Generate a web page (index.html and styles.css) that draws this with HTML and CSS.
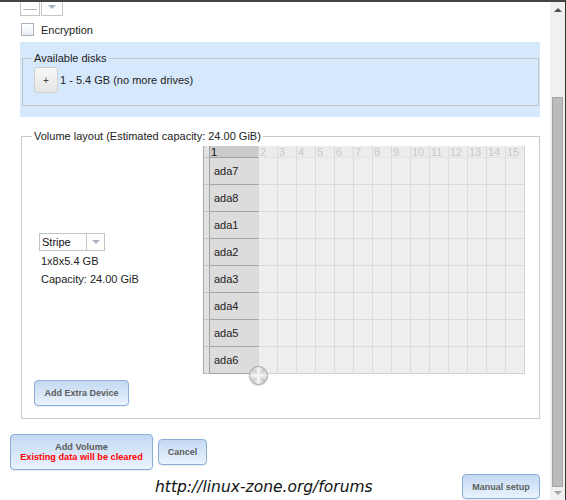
FILE: index.html
```html
<!DOCTYPE html>
<html lang="en">
<head>
    <meta charset="UTF-8">
    <title>Volume Manager</title>
    <link rel="stylesheet" href="styles.css">
</head>
<body>
<div class="window">
    <div class="page">
        <!-- key length select, scrolled mostly out of view -->
        <div class="select select-top">
            <span class="select-value">-----</span>
            <span class="select-arrow"><i class="caret"></i></span>
        </div>

        <label class="check-row"><span class="checkbox"></span>Encryption</label>

        <div class="disk-panel">
            <fieldset class="group">
                <legend>Available disks</legend>
                <div class="disk-row">
                    <button class="btn-plus">+</button>
                    <span>1 - 5.4 GB (no more drives)</span>
                </div>
            </fieldset>
        </div>

        <fieldset class="group volume">
            <legend>Volume layout (Estimated capacity: 24.00 GiB)</legend>
            <div class="layout-row">
                <div class="layout-info">
                    <div class="select select-type">
                        <span class="select-value">Stripe</span>
                        <span class="select-arrow"><i class="caret"></i></span>
                    </div>
                    <div class="info-line">1x8x5.4 GB</div>
                    <div class="info-line">Capacity: 24.00 GiB</div>
                </div>

                <div class="grid-wrap">
                    <div class="disk-grid">
                        <div class="grid-row head">
                            <i class="strip"></i><span class="disk on">1</span>
                            <span class="slot">2</span><span class="slot">3</span><span class="slot">4</span><span class="slot">5</span><span class="slot">6</span><span class="slot">7</span><span class="slot">8</span><span class="slot">9</span><span class="slot">10</span><span class="slot">11</span><span class="slot">12</span><span class="slot">13</span><span class="slot">14</span><span class="slot">15</span>
                        </div>
                        <div class="grid-row"><i class="strip"></i><span class="disk">ada7</span><i class="slot"></i><i class="slot"></i><i class="slot"></i><i class="slot"></i><i class="slot"></i><i class="slot"></i><i class="slot"></i><i class="slot"></i><i class="slot"></i><i class="slot"></i><i class="slot"></i><i class="slot"></i><i class="slot"></i><i class="slot"></i></div>
                        <div class="grid-row"><i class="strip"></i><span class="disk">ada8</span><i class="slot"></i><i class="slot"></i><i class="slot"></i><i class="slot"></i><i class="slot"></i><i class="slot"></i><i class="slot"></i><i class="slot"></i><i class="slot"></i><i class="slot"></i><i class="slot"></i><i class="slot"></i><i class="slot"></i><i class="slot"></i></div>
                        <div class="grid-row"><i class="strip"></i><span class="disk">ada1</span><i class="slot"></i><i class="slot"></i><i class="slot"></i><i class="slot"></i><i class="slot"></i><i class="slot"></i><i class="slot"></i><i class="slot"></i><i class="slot"></i><i class="slot"></i><i class="slot"></i><i class="slot"></i><i class="slot"></i><i class="slot"></i></div>
                        <div class="grid-row"><i class="strip"></i><span class="disk">ada2</span><i class="slot"></i><i class="slot"></i><i class="slot"></i><i class="slot"></i><i class="slot"></i><i class="slot"></i><i class="slot"></i><i class="slot"></i><i class="slot"></i><i class="slot"></i><i class="slot"></i><i class="slot"></i><i class="slot"></i><i class="slot"></i></div>
                        <div class="grid-row"><i class="strip"></i><span class="disk">ada3</span><i class="slot"></i><i class="slot"></i><i class="slot"></i><i class="slot"></i><i class="slot"></i><i class="slot"></i><i class="slot"></i><i class="slot"></i><i class="slot"></i><i class="slot"></i><i class="slot"></i><i class="slot"></i><i class="slot"></i><i class="slot"></i></div>
                        <div class="grid-row"><i class="strip"></i><span class="disk">ada4</span><i class="slot"></i><i class="slot"></i><i class="slot"></i><i class="slot"></i><i class="slot"></i><i class="slot"></i><i class="slot"></i><i class="slot"></i><i class="slot"></i><i class="slot"></i><i class="slot"></i><i class="slot"></i><i class="slot"></i><i class="slot"></i></div>
                        <div class="grid-row"><i class="strip"></i><span class="disk">ada5</span><i class="slot"></i><i class="slot"></i><i class="slot"></i><i class="slot"></i><i class="slot"></i><i class="slot"></i><i class="slot"></i><i class="slot"></i><i class="slot"></i><i class="slot"></i><i class="slot"></i><i class="slot"></i><i class="slot"></i><i class="slot"></i></div>
                        <div class="grid-row"><i class="strip"></i><span class="disk">ada6</span><i class="slot"></i><i class="slot"></i><i class="slot"></i><i class="slot"></i><i class="slot"></i><i class="slot"></i><i class="slot"></i><i class="slot"></i><i class="slot"></i><i class="slot"></i><i class="slot"></i><i class="slot"></i><i class="slot"></i><i class="slot"></i></div>
                    </div>
                    <!-- drag knob for resizing the layout -->
                    <span class="knob"></span>
                </div>
            </div>
            <button class="btn btn-extra">Add Extra Device</button>
        </fieldset>

        <div class="actions">
            <button class="btn btn-add">
                <span>Add Volume</span>
                <span class="warn">Existing data will be cleared</span>
            </button>
            <button class="btn btn-cancel">Cancel</button>
        </div>

        <div class="footer">
            <span class="watermark">http://linux-zone.org/forums</span>
            <button class="btn btn-manual">Manual setup</button>
        </div>
    </div>

    <div class="scrollbar">
        <div class="sb-btn"><i class="sb-up"></i></div>
        <div class="sb-thumb"></div>
        <div class="sb-btn sb-bottom"><i class="sb-down"></i></div>
    </div>
</div>
</body>
</html>
```

FILE: styles.css
```css
body {
    margin: 0;
    font-family: "Liberation Sans", Arial, sans-serif;
    font-size: 11px;
    color: #222;
    overflow: hidden;
}
.window {
    display: flex;
    width: 566px;
    height: 500px;
    box-sizing: border-box;
    border-top: 2px solid #444;
    border-right: 1px solid #333;
    overflow: hidden;
}
.page {
    width: 550px;
    overflow: hidden;
}
/* Select boxes */
.select {
    display: flex;
    height: 18px;
}
.select-value,
.select-arrow {
    box-sizing: border-box;
    height: 18px;
    border: 1px solid #c4c4c4;
    background: #fff;
}
.select-arrow {
    display: flex;
    align-items: center;
    justify-content: center;
}
.caret {
    width: 0;
    height: 0;
    border-left: 4px solid transparent;
    border-right: 4px solid transparent;
    border-top: 4px solid #a9b4c2;
}
.select-top {
    margin: -4px 0 0 20px;
}
.select-top .select-value {
    width: 20px;
    font-size: 8px;
    line-height: 20px;
    color: #666;
    text-align: center;
    overflow: hidden;
}
.select-top .select-arrow {
    width: 22px;
    margin-left: 1px;
}
.select-type {
    height: 18px;
    margin-bottom: 1px;
}
.select-type .select-value {
    width: 48px;
    padding-left: 2px;
    line-height: 16px;
    color: #111;
}
.select-type .select-arrow {
    width: 19px;
    margin-left: -1px;
}
/* Encryption checkbox */
.check-row {
    display: flex;
    align-items: center;
    gap: 7px;
    height: 13px;
    margin: 7px 0 0 21px;
}
.checkbox {
    width: 13px;
    height: 13px;
    box-sizing: border-box;
    border: 1px solid #aab4be;
    background: linear-gradient(#fff, #e9eef4);
}
/* Fieldsets */
.disk-panel {
    width: 520px;
    box-sizing: border-box;
    margin: 6px 0 0 20px;
    padding: 10px 1px 11px 2px;
    background: #d6e9fc;
}
.group {
    margin: 0;
    min-width: 0;
    padding: 2px 10px 12px 11px;
    border: 1px solid #c2c6ca;
}
.group legend {
    padding: 0 2px;
    margin-left: -2px;
    line-height: 13px;
}
.disk-row {
    display: flex;
    align-items: center;
    gap: 2px;
}
.btn-plus {
    width: 24px;
    height: 26px;
    padding: 0;
    border: 1px solid #cfcfcf;
    border-radius: 3px;
    background: linear-gradient(#f7f7f7, #e6e6e6);
    font-family: "Liberation Sans", Arial, sans-serif;
    font-size: 10px;
    color: #444;
}
.volume {
    width: 519px;
    box-sizing: border-box;
    margin: 13px 0 0 21px;
    padding: 3px 10px 12px 12px;
    border-color: #cacaca;
}
.layout-row {
    display: flex;
    align-items: center;
}
.layout-info {
    width: 169px;
    box-sizing: border-box;
    padding-left: 5px;
}
.info-line {
    padding-left: 2px;
    line-height: 18px;
}
/* Disk layout grid */
.grid-wrap {
    position: relative;
}
.disk-grid {
    border-left: 1px solid #a9a9a9;
}
.grid-row {
    display: flex;
    height: 27px;
}
.grid-row > * {
    box-sizing: border-box;
    border-bottom: 1px solid #dadada;
    border-right: 1px solid #dadada;
}
.strip {
    width: 6px;
    background: #e2e2e2;
    border-right-color: #a0a0a0 !important;
    border-bottom-color: #c4c4c4 !important;
}
.disk {
    width: 49px;
    padding-left: 4px;
    line-height: 26px;
    background: #dcdcdc;
    border-bottom-color: #a3a3a3 !important;
    color: #222;
}
.slot {
    width: 19px;
    background: #eeeeee;
}
.grid-row:last-child .slot {
    border-bottom-color: #d2d2d2;
}
.slot:last-child {
    border-right-color: #d2d2d2;
}
.head {
    height: 12px;
}
.head > * {
    line-height: 12px;
    font-size: 11px;
    padding-left: 1px;
}
.head .disk {
    padding-left: 1px;
    background: #cbcbcb;
    color: #111;
}
.head .slot {
    color: #c9c9c9;
    background: #ececec;
    border-bottom-color: #e3e3e3;
    white-space: nowrap;
    overflow: hidden;
}
.knob {
    position: absolute;
    left: 46px;
    bottom: -11px;
    width: 19px;
    height: 19px;
    box-sizing: border-box;
    border: 1px solid #a6a6a6;
    border-radius: 50%;
    background:
        radial-gradient(circle, rgba(255,255,255,0.7) 0, rgba(255,255,255,0) 60%),
        conic-gradient(#f4f4f4, #c9c9c9, #efefef, #c4c4c4, #f4f4f4, #cacaca, #f0f0f0, #c6c6c6, #f4f4f4);
    box-shadow: 0 1px 1px rgba(0,0,0,0.15);
}
/* Buttons */
.btn {
    box-sizing: border-box;
    padding: 0;
    border: 1px solid #8aaed6;
    border-radius: 4px;
    background: linear-gradient(#c3d9f2, #eaf3fd);
    font-family: "Liberation Sans", Arial, sans-serif;
    font-weight: bold;
    font-size: 9px;
    color: #5c5c5c;
    box-shadow: 0 1px 1px rgba(0,0,0,0.08);
}
.btn-extra {
    display: block;
    width: 95px;
    height: 26px;
    margin-top: 6px;
}
.actions {
    display: flex;
    align-items: center;
    gap: 5px;
    margin: 15px 0 0 10px;
}
.btn-add {
    display: flex;
    flex-direction: column;
    align-items: center;
    justify-content: center;
    width: 143px;
    height: 36px;
    font-size: 9.2px;
    line-height: 10px;
}
.warn {
    color: #ff0000;
}
.btn-cancel {
    width: 49px;
    height: 26px;
}
.footer {
    display: flex;
    align-items: center;
    justify-content: space-between;
    margin-top: 4px;
    padding: 0 10px 0 155px;
}
.watermark {
    font-family: "DejaVu Sans", sans-serif;
    font-size: 15.5px;
    font-style: italic;
    color: #111;
}
.btn-manual {
    width: 78px;
    height: 25px;
}
/* Scrollbar */
.scrollbar {
    width: 15px;
    display: flex;
    flex-direction: column;
    align-items: center;
    background: #f0f0f0;
}
.sb-btn {
    height: 15px;
    display: flex;
    align-items: center;
    justify-content: center;
}
.sb-up {
    width: 0;
    height: 0;
    border-left: 4px solid transparent;
    border-right: 4px solid transparent;
    border-bottom: 4px solid #505050;
}
.sb-thumb {
    width: 11px;
    height: 390px;
    margin-top: 80px;
    box-sizing: border-box;
    border: 1px solid #a5a5a5;
    background: #bbbbbb;
}
.sb-bottom {
    height: 11px;
}
.sb-down {
    width: 0;
    height: 0;
    border-left: 4px solid transparent;
    border-right: 4px solid transparent;
    border-top: 4px solid #a3a3a3;
}
```
